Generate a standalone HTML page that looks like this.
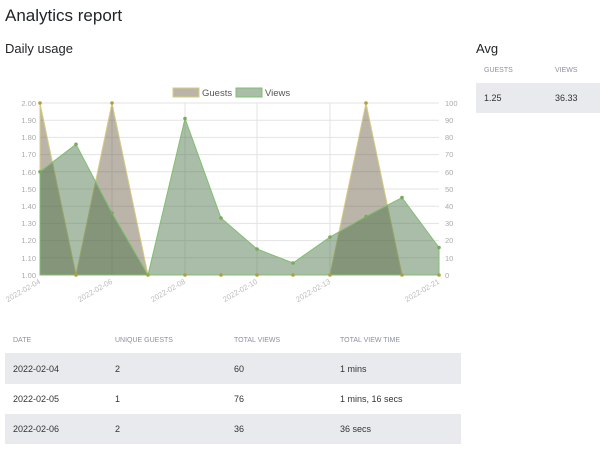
<!DOCTYPE html>
<html><head><style>
body{margin:0;background:#fff;font-family:"Liberation Sans",sans-serif;color:#212529;width:600px;height:450px;overflow:hidden;position:relative}
.abs{position:absolute}
h1{position:absolute;left:5px;top:6px;margin:0;font-size:17px;font-weight:normal}
h2{position:absolute;margin:0;font-size:13px;font-weight:normal}
.th{position:absolute;font-size:7px;color:#8a90a6;text-transform:uppercase}
.row{position:absolute;background:#e9eaee}
.td{position:absolute;font-size:9px;color:#333}
</style></head><body>
<h1>Analytics report</h1>
<h2 style="left:5px;top:41px">Daily usage</h2>
<h2 style="left:476px;top:41px">Avg</h2>
<div class="th" style="left:484px;top:67px">Guests</div>
<div class="th" style="left:555px;top:67px">Views</div>
<div class="row" style="left:476px;top:83px;width:124px;height:30px"></div>
<div class="td" style="left:484px;top:93px">1.25</div>
<div class="td" style="left:555px;top:93px">36.33</div>

<svg class="abs" style="left:0;top:0" width="470" height="310" font-family="Liberation Sans, sans-serif">
<g stroke="#e3e3e3" stroke-width="1">
<line x1="40" x2="439" y1="103" y2="103"/><line x1="40" x2="439" y1="120.2" y2="120.2"/><line x1="40" x2="439" y1="137.4" y2="137.4"/><line x1="40" x2="439" y1="154.6" y2="154.6"/><line x1="40" x2="439" y1="171.8" y2="171.8"/><line x1="40" x2="439" y1="189" y2="189"/><line x1="40" x2="439" y1="206.2" y2="206.2"/><line x1="40" x2="439" y1="223.4" y2="223.4"/><line x1="40" x2="439" y1="240.6" y2="240.6"/><line x1="40" x2="439" y1="257.8" y2="257.8"/><line x1="40" x2="439" y1="275" y2="275"/>
<line x1="112" x2="112" y1="103" y2="275"/><line x1="185" x2="185" y1="103" y2="275"/><line x1="257" x2="257" y1="103" y2="275"/><line x1="330" x2="330" y1="103" y2="275"/>
</g>
<polygon fill="rgba(105,92,68,0.46)" stroke="#d8cc80" stroke-width="1" points="40,275 40,103 76,275 112,103 148,275 185,275 221,275 257,275 293,275 330,275 366,103 402,275 439,275"/>
<polygon fill="rgba(75,115,70,0.47)" stroke="#7fbf6f" stroke-width="1" points="40,275 40,171.8 76,144.3 112,213 148,275 185,118.5 221,218 257,249 293,263 330,237 366,216.5 402,197.6 439,247.5 439,275"/>
<g fill="#7aaa60"><circle cx="40" cy="171.8" r="1.8"/><circle cx="76" cy="144.3" r="1.8"/><circle cx="112" cy="213" r="1.8"/><circle cx="185" cy="118.5" r="1.8"/><circle cx="221" cy="218" r="1.8"/><circle cx="257" cy="249" r="1.8"/><circle cx="293" cy="263" r="1.8"/><circle cx="330" cy="237" r="1.8"/><circle cx="366" cy="216.5" r="1.8"/><circle cx="402" cy="197.6" r="1.8"/><circle cx="439" cy="247.5" r="1.8"/></g>
<g fill="#b0a040"><circle cx="40" cy="103" r="1.8"/><circle cx="76" cy="275" r="1.8"/><circle cx="112" cy="103" r="1.8"/><circle cx="148" cy="275" r="1.8"/><circle cx="185" cy="275" r="1.8"/><circle cx="221" cy="275" r="1.8"/><circle cx="257" cy="275" r="1.8"/><circle cx="293" cy="275" r="1.8"/><circle cx="330" cy="275" r="1.8"/><circle cx="366" cy="103" r="1.8"/><circle cx="402" cy="275" r="1.8"/><circle cx="439" cy="275" r="1.8"/></g>
<g font-size="7.5" fill="#aaa" text-anchor="end">
<text x="36" y="106">2.00</text><text x="36" y="123">1.90</text><text x="36" y="140">1.80</text><text x="36" y="157">1.70</text><text x="36" y="175">1.60</text><text x="36" y="192">1.50</text><text x="36" y="209">1.40</text><text x="36" y="226">1.30</text><text x="36" y="243">1.20</text><text x="36" y="261">1.10</text><text x="36" y="278">1.00</text>
</g>
<g font-size="7.5" fill="#aaa">
<text x="445" y="106">100</text><text x="445" y="123">90</text><text x="445" y="140">80</text><text x="445" y="157">70</text><text x="445" y="175">60</text><text x="445" y="192">50</text><text x="445" y="209">40</text><text x="445" y="226">30</text><text x="445" y="243">20</text><text x="445" y="261">10</text><text x="445" y="278">0</text>
</g>
<g font-size="7.5" fill="#bbb" text-anchor="end">
<text transform="translate(41,283) rotate(-30)">2022-02-04</text>
<text transform="translate(113,283) rotate(-30)">2022-02-06</text>
<text transform="translate(186,283) rotate(-30)">2022-02-08</text>
<text transform="translate(258,283) rotate(-30)">2022-02-10</text>
<text transform="translate(331,283) rotate(-30)">2022-02-13</text>
<text transform="translate(440,283) rotate(-30)">2022-02-21</text>
</g>
<rect x="173" y="88" width="26" height="9" fill="rgba(105,92,68,0.46)" stroke="#d8cc80"/>
<text x="202" y="96" font-size="9.5" fill="#555">Guests</text>
<rect x="236" y="88" width="26" height="9" fill="rgba(75,115,70,0.47)" stroke="#7fbf6f"/>
<text x="265" y="96" font-size="9.5" fill="#555">Views</text>
</svg>

<div class="th" style="left:13px;top:337px">Date</div>
<div class="th" style="left:115px;top:337px">Unique guests</div>
<div class="th" style="left:234px;top:337px">Total views</div>
<div class="th" style="left:340px;top:337px">Total view time</div>
<div class="row" style="left:5px;top:353px;width:456px;height:31px"></div>
<div class="row" style="left:5px;top:414px;width:456px;height:30px"></div>
<div class="td" style="left:13px;top:364px">2022-02-04</div><div class="td" style="left:115px;top:364px">2</div><div class="td" style="left:234px;top:364px">60</div><div class="td" style="left:340px;top:364px">1 mins</div>
<div class="td" style="left:13px;top:394px">2022-02-05</div><div class="td" style="left:115px;top:394px">1</div><div class="td" style="left:234px;top:394px">76</div><div class="td" style="left:340px;top:394px">1 mins, 16 secs</div>
<div class="td" style="left:13px;top:424px">2022-02-06</div><div class="td" style="left:115px;top:424px">2</div><div class="td" style="left:234px;top:424px">36</div><div class="td" style="left:340px;top:424px">36 secs</div>
</body></html>
